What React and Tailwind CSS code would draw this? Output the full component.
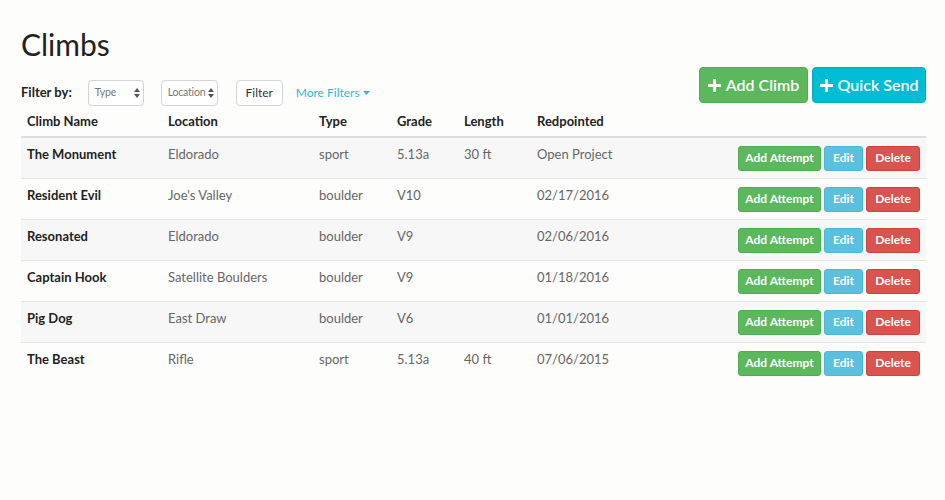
const climbs = [
  { name: "The Monument", location: "Eldorado", type: "sport", grade: "5.13a", length: "30 ft", redpointed: "Open Project" },
  { name: "Resident Evil", location: "Joe's Valley", type: "boulder", grade: "V10", length: "", redpointed: "02/17/2016" },
  { name: "Resonated", location: "Eldorado", type: "boulder", grade: "V9", length: "", redpointed: "02/06/2016" },
  { name: "Captain Hook", location: "Satellite Boulders", type: "boulder", grade: "V9", length: "", redpointed: "01/18/2016" },
  { name: "Pig Dog", location: "East Draw", type: "boulder", grade: "V6", length: "", redpointed: "01/01/2016" },
  { name: "The Beast", location: "Rifle", type: "sport", grade: "5.13a", length: "40 ft", redpointed: "07/06/2015" },
];

const Updown = () => (
  <svg width="6" height="10" viewBox="0 0 6 10" className="shrink-0 fill-[#555]">
    <path d="M3 0 L6 4 H0 Z M0 6 H6 L3 10 Z" />
  </svg>
);

const Plus = () => (
  <svg width="13" height="13" viewBox="0 0 13 13" className="fill-white">
    <path d="M5 0 H8 V5 H13 V8 H8 V13 H5 V8 H0 V5 H5 Z" />
  </svg>
);

const FakeSelect = ({ label, width }) => (
  <div
    className={`flex h-[26px] items-center justify-between rounded-[4px] border border-[#d4d4d4] bg-white pl-[6px] pr-[3px] text-[10.5px] tracking-[-0.2px] text-[#777] ${width}`}
  >
    <span>{label}</span>
    <Updown />
  </div>
);

const pad = "pt-[7px] pb-[7px] leading-[18px]";

export default function App() {
  return (
    <div
      className="min-h-[500px] bg-[#fdfdfb] pl-[21px] pr-[19px] pt-[28px] text-[13px] text-[#333]"
      style={{ fontFamily: "Lato, 'Open Sans', sans-serif" }}
    >
      <h1 className="text-[30px] leading-[33px] font-normal text-[#222]">Climbs</h1>

      <div className="mt-[6px] flex items-end justify-between">
        <div className="flex items-center">
          <span className="mr-[16px] font-bold text-[#222]">Filter by:</span>
          <FakeSelect label="Type" width="w-[56px]" />
          <div className="w-[17px]" />
          <FakeSelect label="Location" width="w-[57px]" />
          <button className="ml-[18px] h-[26px] w-[47px] rounded-[4px] border border-[#d4d4d4] bg-white text-[12px] text-[#333]">
            Filter
          </button>
          <a className="ml-[13px] flex items-center gap-[3px] text-[12px] text-[#2fb9d6]">
            More Filters
            <svg width="7" height="4" viewBox="0 0 7 4" className="fill-[#2fb9d6]">
              <path d="M0 0 H7 L3.5 4 Z" />
            </svg>
          </a>
        </div>
        <div className="mb-[3px] flex gap-[4px]">
          <button className="flex h-[36px] w-[109px] items-center justify-center gap-[5px] rounded-[4px] border border-[#4cae4c] bg-[#5cb85c] text-[16px] font-semibold text-white">
            <Plus />
            Add Climb
          </button>
          <button className="flex h-[36px] w-[114px] items-center justify-center gap-[5px] rounded-[4px] border border-[#00acc1] bg-[#00bcd4] text-[16px] font-semibold text-white">
            <Plus />
            Quick Send
          </button>
        </div>
      </div>

      <table className="mt-[6px] w-full border-collapse text-left">
        <thead>
          <tr className="border-b-2 border-[#dedede]">
            <th className="w-[147px] pb-[4px] pl-[6px] font-bold text-[#222]">Climb Name</th>
            <th className="w-[151px] pb-[4px] font-bold text-[#222]">Location</th>
            <th className="w-[78px] pb-[4px] font-bold text-[#222]">Type</th>
            <th className="w-[67px] pb-[4px] font-bold text-[#222]">Grade</th>
            <th className="w-[73px] pb-[4px] font-bold text-[#222]">Length</th>
            <th className="pb-[4px] font-bold text-[#222]">Redpointed</th>
            <th className="pb-[4px]"></th>
          </tr>
        </thead>
        <tbody>
          {climbs.map((c, i) => (
            <tr
              key={c.name}
              className={`align-top ${i % 2 === 0 ? "bg-[#f7f7f8]" : ""} ${i === climbs.length - 1 ? "" : "border-b border-[#e4e4e4]"}`}
            >
              <td className={`${pad} pl-[6px] font-bold text-[#1f1f1f]`}>{c.name}</td>
              <td className={`${pad} text-[#666]`}>{c.location}</td>
              <td className={`${pad} text-[#666]`}>{c.type}</td>
              <td className={`${pad} text-[#666]`}>{c.grade}</td>
              <td className={`${pad} text-[#666]`}>{c.length}</td>
              <td className={`${pad} text-[#666]`}>{c.redpointed}</td>
              <td className="pt-[8px] pb-[7px] pr-[6px]">
                <div className="flex justify-end gap-[3px]">
                  <button className="h-[25px] w-[83px] rounded-[3px] border border-[#4cae4c] bg-[#5cb85c] text-[12px] font-bold text-white">
                    Add Attempt
                  </button>
                  <button className="h-[25px] w-[39px] rounded-[3px] border border-[#46b8da] bg-[#5bc0de] text-[12px] font-bold text-white">
                    Edit
                  </button>
                  <button className="h-[25px] w-[54px] rounded-[3px] border border-[#d43f3a] bg-[#d9534f] text-[12px] font-bold text-white">
                    Delete
                  </button>
                </div>
              </td>
            </tr>
          ))}
        </tbody>
      </table>
    </div>
  );
}
